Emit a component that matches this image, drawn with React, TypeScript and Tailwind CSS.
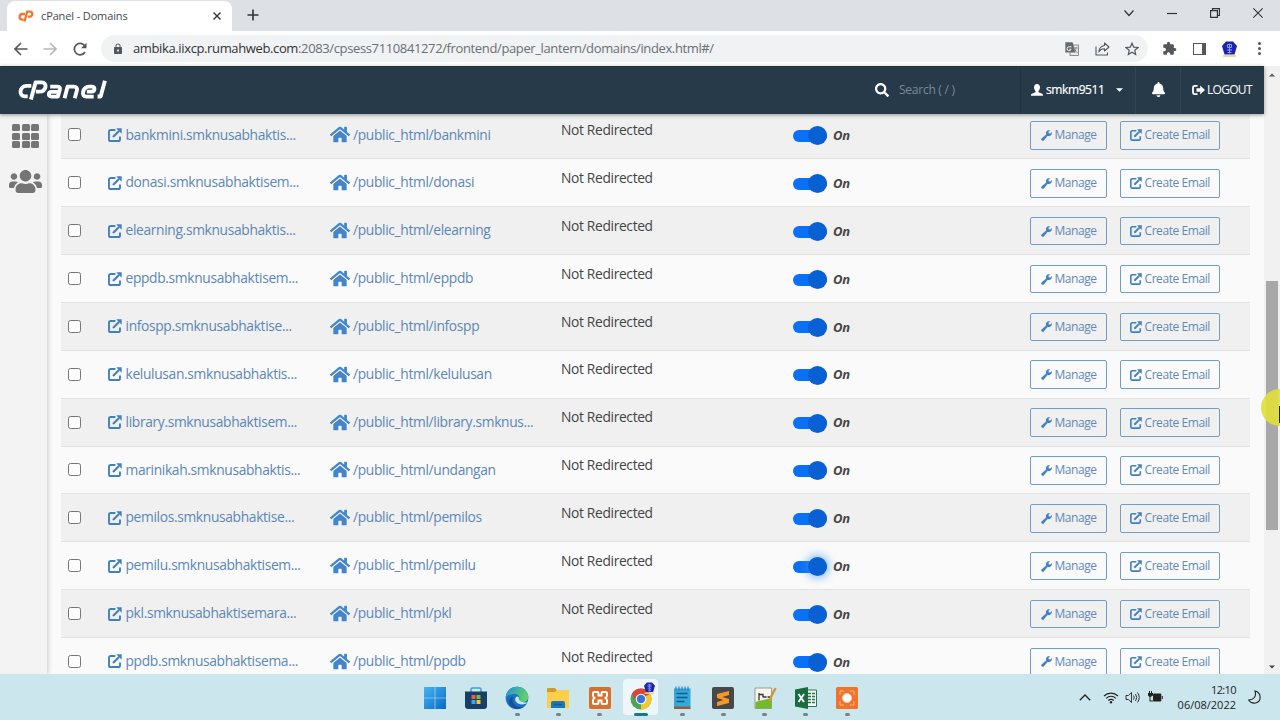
import type { ReactNode } from "react";
import { FaBell, FaHome, FaSearch, FaUsers } from "react-icons/fa";
import { MdExtension, MdLock } from "react-icons/md";

const DOMAINS = [
  { name: "bankmini.smknusabhaktis...", path: "/public_html/bankmini" },
  { name: "donasi.smknusabhaktisem...", path: "/public_html/donasi" },
  { name: "elearning.smknusabhaktis...", path: "/public_html/elearning" },
  { name: "eppdb.smknusabhaktisem...", path: "/public_html/eppdb" },
  { name: "infospp.smknusabhaktise...", path: "/public_html/infospp" },
  { name: "kelulusan.smknusabhaktis...", path: "/public_html/kelulusan" },
  { name: "library.smknusabhaktisem...", path: "/public_html/library.smknus..." },
  { name: "marinikah.smknusabhaktis...", path: "/public_html/undangan" },
  { name: "pemilos.smknusabhaktise...", path: "/public_html/pemilos" },
  { name: "pemilu.smknusabhaktisem...", path: "/public_html/pemilu", focused: true },
  { name: "pkl.smknusabhaktisemara...", path: "/public_html/pkl" },
  { name: "ppdb.smknusabhaktisema...", path: "/public_html/ppdb" },
];

function ExternalIcon({ className }: { className: string }) {
  return (
    <svg viewBox="0 0 14 14" className={className} fill="none" stroke="currentColor">
      <path d="M7.400 2H2.600A1.600 1.600 0 0 0 1 3.600V11.400A1.600 1.600 0 0 0 2.600 13H10.400A1.600 1.600 0 0 0 12 11.400V8.600" strokeWidth="1.900" />
      <path d="M5 9l6-6" strokeWidth="2.200" />
      <path d="M8.200.3h5.500v5.500z" fill="currentColor" stroke="none" />
    </svg>
  );
}

function WrenchIcon({ className }: { className: string }) {
  return (
    <svg viewBox="0 0 12 12" className={className}>
      <path
        d="M11.700 2.500a3.300 3.300 0 0 1-4.500 3.700L3 11.200a1.400 1.400 0 0 1-2.200-2l5-4.400A3.300 3.300 0 0 1 9.600.3L8 2.200l.5 1.500 1.500.4z"
        fill="currentColor"
        stroke="currentColor"
        strokeWidth=".3"
      />
    </svg>
  );
}

function TabStrip() {
  return (
    <div className="flex h-[31px] bg-[#dde1e5]">
      <div className="mt-px ml-[7px] flex w-[225px] items-center rounded-t-lg bg-white pr-[11px] pl-[11px]">
        <svg viewBox="0 0 16 12" className="h-3 w-4" fill="none" stroke="#f0762d" strokeWidth="2.300">
          <path d="M7 4H4.400a2.800 2.800 0 0 0 0 5.600h1.200M6.500 11.500L9.200 1.600h2.600a2.500 2.500 0 0 1 0 5H9.800" />
        </svg>
        <span className="ml-[7px] text-[11px] tracking-[-0.130px] text-[#45484c]">cPanel - Domains</span>
        <svg viewBox="0 0 8 8" className="ml-auto size-2" stroke="#333" strokeWidth="1.400">
          <path d="M.5.5l7 7M7.500.5l-7 7" />
        </svg>
      </div>
      <svg viewBox="0 0 12 12" className="mt-[9px] ml-[15px] size-3" stroke="#333" strokeWidth="1.600">
        <path d="M6 .5v11M.5 6h11" />
      </svg>
      <div className="mt-[8px] mr-[17px] ml-auto flex h-[10px] items-center gap-[33px] text-[#333]">
        <svg viewBox="0 0 10 10" className="size-[10px]" fill="none" stroke="currentColor" strokeWidth="1.200">
          <path d="M.5 2.500L5 7.500l4.500-5" />
        </svg>
        <svg viewBox="0 0 10 10" className="size-[10px]" stroke="currentColor" strokeWidth="1.200">
          <path d="M0 5.500h10" />
        </svg>
        <svg viewBox="0 0 10 10" className="size-[10px]" fill="none" stroke="currentColor" strokeWidth="1.200">
          <path d="M.6 2.600h6.800v6.800H.6zM2.500 2.500V.6h6.900v6.900H7.500" />
        </svg>
        <svg viewBox="0 0 10 10" className="size-[10px]" stroke="currentColor" strokeWidth="1.100">
          <path d="M.4.4l9.200 9.200M9.600.4L.4 9.600" />
        </svg>
      </div>
    </div>
  );
}

function Toolbar() {
  return (
    <div className="flex h-[35px] items-center bg-white text-[#54585c]">
      <svg viewBox="0 0 14 14" className="ml-[14px] size-[14px]" fill="none" stroke="currentColor" strokeWidth="1.600">
        <path d="M13.500 7H1M7 1L1 7l6 6" />
      </svg>
      <svg viewBox="0 0 14 14" className="ml-[15px] size-[14px] text-[#b5b8bb]" fill="none" stroke="currentColor" strokeWidth="1.600">
        <path d="M.5 7H13M7 1l6 6-6 6" />
      </svg>
      <svg viewBox="0 0 14 14" className="ml-4 size-[14px]" fill="none" stroke="currentColor" strokeWidth="1.700">
        <path d="M12 10a5.700 5.700 0 1 1-.4-6.400" />
        <path d="M13.500.8v5.500H8z" fill="currentColor" stroke="none" />
      </svg>
      <div className="ml-[14px] flex h-[27px] w-[1047px] items-center rounded-full bg-[#f0f2f4] pr-[9px] pl-[11px]">
        <MdLock className="size-3 text-[#54585c]" />
        <span className="ml-[9px] text-[13px] tracking-[-0.370px] whitespace-nowrap text-[#6b6f73]">
          <span className="text-[#303336]">ambika.iixcp.rumahweb.com</span>
          :2083/cpsess7110841272/frontend/paper_lantern/domains/index.html#/
        </span>
        <svg viewBox="0 0 14 14" className="ml-auto size-[14px]">
          <rect x="5" y="3" width="8.500" height="10.500" fill="#e7e9eb" stroke="#777" strokeWidth=".8" />
          <path d="M.3.3h7.400l2.700 10.200H.3z" fill="#666a6d" />
          <path d="M6.500 4.800H4.200a2 2 0 1 0 1.800 2.400H4.400" fill="none" stroke="#fff" strokeWidth=".9" />
          <path d="M8.800 6h4M11 5v1c0 2-1 3.500-2 4.500M9.500 7.500l3 3.500" fill="none" stroke="#777" strokeWidth=".8" />
        </svg>
        <svg viewBox="0 0 15 14" className="ml-4 h-[14px] w-[15px]" fill="none" stroke="currentColor" strokeWidth="1.100" strokeLinejoin="round">
          <path d="M1 4.500V13h11.500v-2.500M9.500 1l4.500 4-4.500 4V6.800C6.500 6.700 5 7.800 3.800 10c.2-3.500 2.200-6 5.700-6.500z" />
        </svg>
        <svg viewBox="0 0 14 14" className="ml-[15px] size-[14px]" fill="none" stroke="currentColor" strokeWidth="1.200">
          <path d="M7 1.200l1.700 3.900 4.300.4-3.200 2.800.9 4.200L7 10.300l-3.700 2.200.9-4.200L1 5.500l4.300-.4z" />
        </svg>
      </div>
      <MdExtension className="ml-[14px] size-[15px]" />
      <div className="ml-[16px] h-3 w-[13px] border-[1.500px] border-r-[4px] border-current" />
      <Crest className="ml-[16px] h-4 w-[15px]" />
      <div className="ml-[21px] flex flex-col gap-[2.500px]">
        <i className="size-[2.500px] rounded-full bg-current" />
        <i className="size-[2.500px] rounded-full bg-current" />
        <i className="size-[2.500px] rounded-full bg-current" />
      </div>
    </div>
  );
}

function Crest({ className }: { className: string }) {
  return (
    <svg viewBox="0 0 15 16" className={className}>
      <path d="M1 15h13" stroke="#e5dc8c" strokeWidth="2" />
      <path d="M4 .5h7l4 4.500-2.500 8.500h-10L0 5z" fill="#1b22b4" />
      <path d="M7.500 2.500v10M5.500 3.500h4v3h-4zM5 9h5M5.500 11.500h4" fill="none" stroke="#8d9ede" strokeWidth="1" />
    </svg>
  );
}

function CpanelLogo() {
  return (
    <svg viewBox="0 0 88 22" preserveAspectRatio="none" className="mt-px h-[22px] w-[90px]" fill="none" stroke="#fff" strokeWidth="3.800" strokeLinejoin="round">
      <path d="M13 6.800H8.500C4.800 6.800 2.700 9.500 2.500 12.500c-.2 3 1.600 4.900 4.100 4.900h2.900" />
      <path d="M12.600 20.500L17.200 3.400H23c3 0 4.500 2.100 3.800 4.800s-2.800 4.500-5.800 4.500h-3.500" />
      <path d="M31.500 7.600h6.800c2.200 0 3.100 1 2.600 2.900l-1.900 7.100h-6.500c-3.300 0-3-4.700.3-4.700h5.800" />
      <path d="M45.500 19.200l3-11.600h5.800c2.800 0 3.900 1.500 3.200 4.100l-2 7.500" />
      <path d="M74 17.600h-7c-2.700 0-4-1.800-3.300-4.800.8-3.300 2.700-5.200 5.700-5.200h2.800c3.600 0 3.300 5-.4 5h-4.500" />
      <path d="M85 1.700L80.800 17.500h-3" />
    </svg>
  );
}

function CpanelHeader() {
  return (
    <header className="relative z-10 flex h-12 w-[1264px] items-center border-t border-[#1f3343] bg-[#273a4a] pb-[2px] text-[12px] text-white shadow-[0_1px_4px_rgba(0,0,0,0.4)]">
      <div className="ml-[18px]">
        <CpanelLogo />
      </div>
      <FaSearch className="ml-[767px] size-[14px]" />
      <span className="ml-[10px] w-[121px] text-[12px] tracking-[-0.250px] text-[#7c8995]">Search ( / )</span>
      <div className="-mb-[2px] flex h-[47px] w-[115px] items-center border-l border-[#23333f] pb-[2px] pl-[10px]">
        <svg viewBox="0 0 12 12" className="size-3" fill="currentColor">
          <path d="M6 0c1.900 0 3 1.400 3 3.300 0 1.500-.6 2.900-1.500 3.600v1.300l3.700 1.600c.6.300.8.700.8 1.200v.8H0V11c0-.5.200-.9.800-1.200l3.700-1.600V6.900C3.600 6.200 3 4.800 3 3.300 3 1.400 4.100 0 6 0z" />
        </svg>
        <span className="ml-[3px] w-[70px] tracking-[-0.400px] [-webkit-text-stroke:0.200px_white]">smkm9511</span>
        <svg viewBox="0 0 8 4" className="h-1 w-[7px] shrink-0" fill="currentColor">
          <path d="M0 0h8L4 4z" />
        </svg>
      </div>
      <div className="-mb-[2px] flex h-[47px] w-[45px] items-center justify-center border-l border-[#314454] pb-[2px]">
        <FaBell className="size-[15px]" />
      </div>
      <div className="-mb-[2px] flex h-[47px] items-center border-l border-[#314454] pb-[2px] pl-[11px]">
        <svg viewBox="0 0 13 12" className="h-3 w-[13px]" fill="none" stroke="currentColor" strokeWidth="1.800">
          <path d="M5.500 1.900H2.800C1.700 1.900 1 2.600 1 3.700v4.600c0 1.100.7 1.800 1.800 1.800h2.700" />
          <path d="M4.500 4.300h3.700V1.500L13 6l-4.800 4.500V7.700H4.500z" fill="currentColor" stroke="none" />
        </svg>
        <span className="ml-[2px] tracking-[-0.700px]">LOGOUT</span>
      </div>
    </header>
  );
}

function ActionButton({ icon, label, className }: { icon: ReactNode; label: string; className: string }) {
  return (
    <button
      className={`mt-px flex h-[28.500px] items-center rounded-[2px] border border-[#6f9fc9] text-[12px] tracking-[-0.430px] whitespace-nowrap text-[#6289b5] ${className}`}
    >
      {icon}
      <span className="ml-[2.500px]">{label}</span>
    </button>
  );
}

function DomainRow({ name, path, focused }: { name: string; path: string; focused?: boolean }) {
  return (
    <div className="flex h-[47.860px] items-center border-b border-[#e2e2e2] pl-[7px] text-[13.800px] tracking-[-0.340px] whitespace-nowrap text-[#5c87b5] odd:bg-[#f0f0f0] even:bg-[#fafafa]">
      <div className="size-[13px] rounded-[2.500px] border border-[#767676] bg-white" />
      <div className="ml-[27px] flex w-[222px] items-center">
        <ExternalIcon className="size-[14px] text-[#4280bd]" />
        <span className="ml-[3.500px]">{name}</span>
      </div>
      <div className="flex w-[231px] items-center">
        <FaHome className="h-[19px] w-[20px] text-[#4285c8]" />
        <span className="ml-[3px]">{path}</span>
      </div>
      <div className="w-[232px] pb-[9px] text-[#444]">Not Redirected</div>
      <div className="mt-[2px] flex w-[237px] items-center">
        <div className="flex h-3 w-[34px] items-center justify-end rounded-full bg-[#0a70f5]">
          <div
            className={`size-[19px] shrink-0 rounded-full bg-[#0860d2] ${
              focused ? "shadow-[0_0_8px_2px_rgba(60,150,245,0.6)]" : ""
            }`}
          />
        </div>
        <b className="ml-[6px] text-[13px] text-[#444] italic">On</b>
      </div>
      <ActionButton className="w-[77px] pl-[10px]" icon={<WrenchIcon className="size-[11px] text-[#3f7fbf]" />} label="Manage" />
      <ActionButton
        className="ml-[13px] w-[100px] pl-[9px]"
        icon={<ExternalIcon className="size-[12px] text-[#3f7fbf]" />}
        label="Create Email"
      />
    </div>
  );
}

function Scrollbar() {
  return (
    <div className="relative flex w-4 shrink-0 flex-col items-center bg-[#f1f1f1]">
      <svg viewBox="0 0 8 4" className="mt-[7px] h-1 w-[6px]" fill="#555">
        <path d="M0 4h8L4 0z" />
      </svg>
      <div className="mt-[204px] h-[249px] w-[12px] bg-[#a8a8a8]" />
      <svg viewBox="0 0 8 4" className="mt-auto mb-[5px] h-1 w-[6px]" fill="#444">
        <path d="M0 0h8L4 4z" />
      </svg>
      <div className="absolute top-[323px] left-[-3px] h-[37px] w-[19px] overflow-hidden">
        <div className="size-[37px] rounded-full bg-[#dfdf38]/90" />
        <div className="absolute top-[17px] right-0 h-[17px] w-[1.500px] bg-[#222]" />
      </div>
    </div>
  );
}

const APPS = [
  {
    name: "start",
    icon: (
      <>
        <linearGradient id="win" x2="1" y2="1">
          <stop stopColor="#45b5f0" />
          <stop offset="1" stopColor="#0a68ca" />
        </linearGradient>
        <path d="M1 1h10.700v10.700H1zM12.300 1H23v10.700H12.300zM1 12.300h10.700V23H1zM12.300 12.300H23V23H12.300z" fill="url(#win)" />
      </>
    ),
  },
  {
    name: "store",
    icon: (
      <>
        <path d="M7 6V3.500Q7 2 8.500 2h7Q17 2 17 3.500V6" fill="none" stroke="#3a9ed4" strokeWidth="1.500" />
        <path d="M1 5.500h22V20q0 3-3 3H4q-3 0-3-3z" fill="#183f68" />
        <path d="M7.500 9h4v4h-4z" fill="#e8613c" />
        <path d="M12.500 9h4v4h-4z" fill="#7dba3b" />
        <path d="M7.500 14h4v4h-4z" fill="#3ba5e8" />
        <path d="M12.500 14h4v4h-4z" fill="#f5c33a" />
      </>
    ),
  },
  {
    name: "edge",
    running: true,
    icon: (
      <>
        <linearGradient id="edge" x2="1" y2=".3">
          <stop stopColor="#2191d8" />
          <stop offset="1" stopColor="#5fce6c" />
        </linearGradient>
        <circle cx="12" cy="12" r="11.300" fill="#1b6fc0" />
        <path d="M.7 11.500C1.300 5 6 .7 12 .7c6.500 0 11.300 4.600 11.300 10 0 3.700-2.800 5.500-5.800 5.500-2.500 0-4-1-3.500-2.300 1.500-3-.5-6-4-6C5.500 7.900 2 9.500.7 11.500z" fill="url(#edge)" />
        <path d="M8 10.500c-2 6 2.500 11.500 9.500 10.800C12 25 3.500 21 4 15.500c.2-2.500 2-4.500 4-5z" fill="#164f9c" />
        <path d="M11 11c-2.500 3.500 1 7.500 6 7.500 2.500 0 5-1 6.500-2.500-3 1.200-9 .2-9.500-2.500.8-2-1.500-4-3-2.500z" fill="#cce6ee" />
      </>
    ),
  },
  {
    name: "explorer",
    running: true,
    icon: (
      <>
        <path d="M1 3q0-1 1-1h7l2 2.500h12V8H1z" fill="#d39a24" />
        <path d="M1 6h8l2-2h12v18H1z" fill="#fbcf4b" />
        <path d="M5 22v-5q0-2 2-2h10q2 0 2 2v5z" fill="#1878bd" />
        <path d="M8 18.500h8" stroke="#145c99" strokeWidth="1.500" />
      </>
    ),
  },
  {
    name: "xampp",
    running: true,
    icon: (
      <>
        <rect x="1" y="1" width="22" height="22" rx="2" fill="#d7702c" />
        <path
          d="M6.500 6h2.800q1.200 0 1.200 1.200v2.300h3V7.200q0-1.200 1.200-1.200h2.800q1.500 0 1.500 1.500v2q0 1.500-1.500 2.500 1.500 1 1.500 2.500v2q0 1.500-1.500 1.500h-2.800q-1.200 0-1.200-1.200v-2.300h-3v2.300q0 1.200-1.200 1.200H6.500Q5 18 5 16.500v-2q0-1.500 1.500-2.500Q5 11 5 9.500v-2Q5 6 6.500 6z"
          fill="none"
          stroke="#fff"
          strokeWidth="2"
        />
      </>
    ),
  },
  {
    name: "chrome",
    running: true,
    active: true,
    icon: (
      <>
        <circle cx="12" cy="13" r="10.500" fill="#4aa653" />
        <path d="M12 13L2.900 7.750A10.500 10.500 0 0 1 21.100 7.750z" fill="#dc4437" />
        <path d="M12 13L21.100 7.750A10.500 10.500 0 0 1 12 23.500z" fill="#f6c62c" />
        <path d="M2.900 7.750L8 16.500l4-3.500z" fill="#dc4437" />
        <circle cx="12" cy="13" r="5.300" fill="#fff" />
        <circle cx="12" cy="13" r="4.200" fill="#3476de" />
      </>
    ),
  },
  {
    name: "notepad",
    running: true,
    icon: (
      <>
        <path d="M4 2.500h16.500V21H4z" fill="#35a9dc" />
        <path d="M4 20.500h16.500V23H4z" fill="#985b36" />
        <path d="M6.500 7.500h11M6.500 11.500h11M6.500 15.500h8" stroke="#155b85" strokeWidth="1.500" />
        <path d="M6 .5v4M9 .5v4M12 .5v4M15 .5v4M18 .5v4" stroke="#207eae" strokeWidth="1.100" />
      </>
    ),
  },
  {
    name: "sublime",
    running: true,
    icon: (
      <>
        <rect x="1" y="1" width="22" height="22" rx="2" fill="#484848" />
        <path d="M18 5v4l-6.500 2 6.500 2v4L6 20v-4l6.500-2L6 12V8z" fill="#f89822" />
      </>
    ),
  },
  {
    name: "notepadpp",
    running: true,
    icon: (
      <>
        <path d="M2 2h16.500v20.500H2z" fill="#f6f6ee" stroke="#8b8b7b" strokeWidth=".8" />
        <path d="M2.400 16l16-4v10.200h-16z" fill="#73b92a" />
        <path d="M6 7v7.500M6 8.500h4v3M10.500 11h3M14.500 11h2.500" fill="none" stroke="#333" strokeWidth="1.300" />
        <path d="M22.500 2L16 15" stroke="#d2963b" strokeWidth="2.400" />
      </>
    ),
  },
  {
    name: "excel",
    running: true,
    icon: (
      <>
        <path d="M11 4h11.500v16.500H11z" fill="#f5f8f5" stroke="#2c7650" />
        <path d="M14 7.500h7M14 10.500h7M14 13.500h7M14 16.500h7" stroke="#2c7650" strokeWidth="1.500" strokeDasharray="3 1" />
        <path d="M1 3.500L14 1v22L1 20.500z" fill="#1b6c40" />
        <path d="M4.500 8l5.500 8M10 8l-5.500 8" stroke="#fff" strokeWidth="1.900" />
      </>
    ),
  },
  {
    name: "recorder",
    running: true,
    icon: (
      <>
        <rect x="1" y="1" width="22" height="22" rx="1.500" fill="#ee742d" />
        <path d="M5 9V5h4M15 5h4v4M19 15v4h-4M9 19H5v-4" fill="none" stroke="#ffb27a" strokeWidth="1" />
        <circle cx="12" cy="12" r="4.500" fill="#fff" stroke="#ffd5b5" />
      </>
    ),
  },
];

function Taskbar() {
  return (
    <footer className="flex h-[46px] items-center bg-[#cce6ee] pl-[414px] text-[#222]">
      {APPS.map((app) => (
        <div key={app.name} className="flex w-[41.250px] justify-center">
          <div className={`relative flex h-9 w-[35px] shrink-0 justify-center rounded pt-[7px] ${app.active ? "bg-[#edf7fa]" : ""}`}>
            <svg viewBox="0 0 24 24" className="size-6">
              {app.icon}
            </svg>
            {app.active && <Crest className="absolute top-[3px] right-[3px] h-[12px] w-[11px]" />}
            {app.running && (
              <i
                className={`absolute bottom-[-0.500px] h-[2.500px] rounded-full ${
                  app.active ? "w-[14px] bg-[#167888]" : "w-[5px] bg-[#74848a]"
                }`}
              />
            )}
          </div>
        </div>
      ))}
      <svg viewBox="0 0 12 7" className="ml-auto h-[7px] w-3" fill="none" stroke="currentColor" strokeWidth="1.300">
        <path d="M.8 6.200L6 1l5.200 5.200" />
      </svg>
      <svg viewBox="0 0 16 13" className="ml-[12px] h-[13px] w-4" fill="none" stroke="currentColor" strokeWidth="1.100">
        <path d="M1 5a10 10 0 0 1 14 0M3.200 7.300a6.800 6.800 0 0 1 9.600 0M5.300 9.500a3.800 3.800 0 0 1 5.400 0" />
        <circle cx="8" cy="11.300" r="1.200" fill="currentColor" stroke="none" />
      </svg>
      <svg viewBox="0 0 15 13" className="ml-[6px] h-[13px] w-[15px]" fill="none" stroke="currentColor" strokeWidth=".9">
        <path d="M1 4.500h2.500l3-3v10l-3-3H1zM8.500 4.500q1.500 2 0 4M10.500 3q2.500 3.500 0 7M12.500 1.500q3.500 5 0 10" />
      </svg>
      <svg viewBox="0 0 15 12" className="ml-[8px] h-3 w-[15px]" fill="currentColor">
        <path d="M1 0v2H0v2.500L1.500 6v4.500h3.500v-1H2.500V6L5 4.500V2H4V0H3v2H2V0z" />
        <rect x="5" y="2.500" width="8.300" height="8" rx="1" />
        <path d="M13.800 5h1v3h-1z" />
      </svg>
      <div className="ml-[13px] w-[60px] text-right text-[11px] leading-[15px]">
        <div className="tracking-[-0.600px]">12:10</div>
        <div>06/08/2022</div>
      </div>
      <svg viewBox="0 0 13 14" className="mr-[19px] ml-[12px] h-[14px] w-[13px]" fill="none" stroke="currentColor" strokeWidth="1.100">
        <path d="M7 1c6.500 1.500 7 10.500.5 12-3 .5-5.500-.8-6.800-3C5.500 9.800 8.800 6.500 7 1z" />
      </svg>
    </footer>
  );
}

export default function App() {
  return (
    <div className="flex h-[720px] w-[1280px] flex-col overflow-hidden bg-white font-['Open_Sans',sans-serif]">
      <TabStrip />
      <Toolbar />
      <div className="flex h-[608px]">
        <div className="flex w-[1264px] flex-col">
          <CpanelHeader />
          <div className="flex h-[560px] overflow-hidden bg-[#fafafa]">
            <aside className="flex w-[47px] flex-col items-center bg-[#f3f3f3] pl-[4px] text-[#757575] shadow-[1px_0_5px_rgba(0,0,0,0.2)]">
              <div className="mt-[10px] grid grid-cols-3 gap-x-[1.500px] gap-y-[1.500px]">
                {Array.from({ length: 9 }, (_, i) => (
                  <i key={i} className="h-[7px] w-[8px] rounded-[1.500px] bg-current" />
                ))}
              </div>
              <FaUsers className="mt-[17px] h-[33px] w-[33px] shrink-0" />
            </aside>
            <main className="mt-[-2.500px] ml-[14px] w-[1189px]">
              {DOMAINS.map((d) => (
                <DomainRow key={d.name} {...d} />
              ))}
            </main>
          </div>
        </div>
        <Scrollbar />
      </div>
      <Taskbar />
    </div>
  );
}
